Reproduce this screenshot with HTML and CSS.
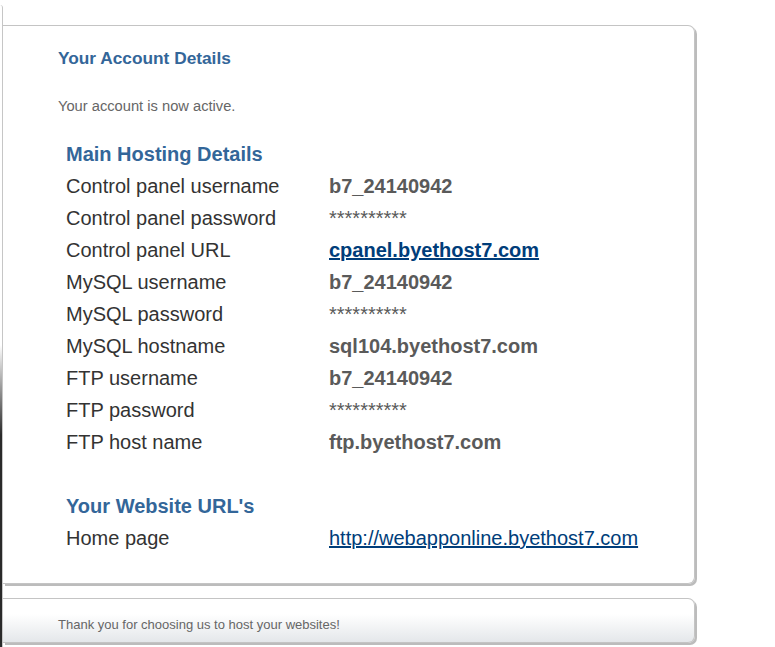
FILE: index.html
```html
<!DOCTYPE html>
<html>
<head>
<meta charset="utf-8">
<title>Your Account Details</title>
<link rel="stylesheet" href="styles.css">
</head>
<body>
<div class="page">
  <div class="rail"></div>
  <div class="content">
    <div class="card">
      <h1 class="title">Your Account Details</h1>
      <p class="status">Your account is now active.</p>
      <table class="details">
        <tr><th colspan="2" class="section">Main Hosting Details</th></tr>
        <tr><td class="label">Control panel username</td><td class="value">b7_24140942</td></tr>
        <tr><td class="label">Control panel password</td><td class="value pw">**********</td></tr>
        <tr><td class="label">Control panel URL</td><td class="value"><a class="strong-link" href="#">cpanel.byethost7.com</a></td></tr>
        <tr><td class="label">MySQL username</td><td class="value">b7_24140942</td></tr>
        <tr><td class="label">MySQL password</td><td class="value pw">**********</td></tr>
        <tr><td class="label">MySQL hostname</td><td class="value">sql104.byethost7.com</td></tr>
        <tr><td class="label">FTP username</td><td class="value">b7_24140942</td></tr>
        <tr><td class="label">FTP password</td><td class="value pw">**********</td></tr>
        <tr><td class="label">FTP host name</td><td class="value">ftp.byethost7.com</td></tr>
        <tr class="spacer"><td colspan="2"></td></tr>
        <tr><th colspan="2" class="section">Your Website URL's</th></tr>
        <tr><td class="label">Home page</td><td class="plain"><a class="link" href="#">http://webapponline.byethost7.com</a></td></tr>
      </table>
    </div>
    <div class="footer">Thank you for choosing us to host your websites!</div>
  </div>
</div>
</body>
</html>
```
FILE: styles.css
```css
html, body {
  margin: 0;
  padding: 0;
  background: #fff;
  font-family: "Liberation Sans", Arial, sans-serif;
}
.page {
  display: flex;
  align-items: flex-start;
  min-height: 647px;
}
.rail {
  flex: 0 0 2px;
  height: 642px;
  margin-top: 5px;
  border-right: 1px solid #c6c6c6;
  border-top-right-radius: 8px;
  background: linear-gradient(to bottom, transparent 0, transparent 340px, #2a2a2a 430px, #2a2a2a 100%);
}
.content {
  flex: 0 0 692px;
  padding-top: 25px;
}
.card {
  border: 1px solid #c4c4c4;
  border-left: none;
  border-radius: 0 7px 7px 0;
  box-shadow: 2px 2px 0 #bcbcbc;
  height: 559px;
  box-sizing: border-box;
  padding: 22px 0 0 55px;
}
.title {
  margin: 0;
  font-size: 17.3px;
  line-height: 21px;
  font-weight: bold;
  color: #336699;
}
.status {
  margin: 28px 0 0;
  font-size: 14.7px;
  line-height: 18px;
  color: #666;
}
.details {
  margin: 23px 0 0 8px;
  border-collapse: collapse;
}
.details td, .details th {
  padding: 0;
  height: 32px;
  line-height: 32px;
  font-size: 20px;
  text-align: left;
  vertical-align: middle;
}
.section {
  color: #336699;
  font-weight: bold;
}
.label {
  width: 263px;
  color: #333;
}
.value {
  color: #5a5a5a;
  font-weight: bold;
}
.pw {
  font-weight: normal;
}
.strong-link {
  color: #003d7a;
  font-weight: bold;
}
.link {
  color: #003d7a;
}
.footer {
  margin-top: 14px;
  height: 45px;
  box-sizing: border-box;
  border: 1px solid #c4c4c4;
  border-left: none;
  border-radius: 0 7px 7px 0;
  box-shadow: 2px 2px 0 #bcbcbc;
  background: linear-gradient(#fff 0%, #fff 35%, #e4e7ea 100%);
  padding: 17px 0 0 55px;
  font-size: 13px;
  line-height: 18px;
  color: #666;
}
```
